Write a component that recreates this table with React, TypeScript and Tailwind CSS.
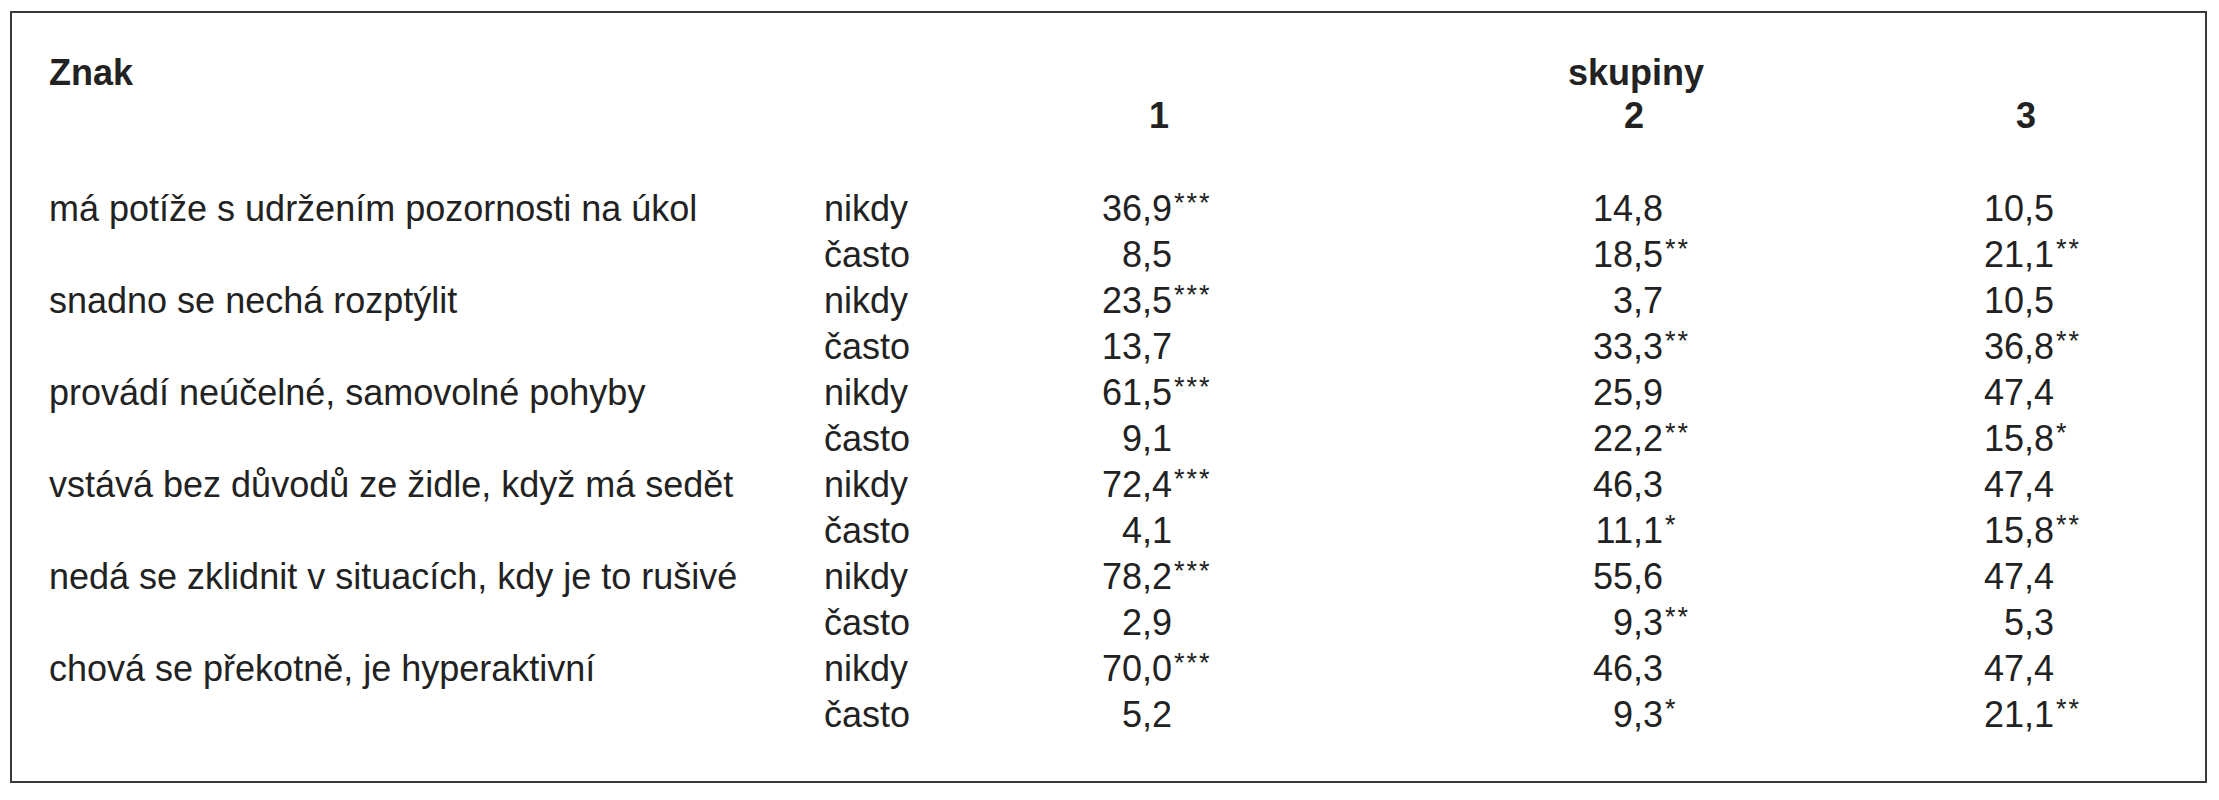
const rows: { label: string; freq: string; v: [string, string][] }[] = [
  { label: 'má potíže s udržením pozornosti na úkol', freq: 'nikdy', v: [['36,9', '***'], ['14,8', ''], ['10,5', '']] },
  { label: '', freq: 'často', v: [['8,5', ''], ['18,5', '**'], ['21,1', '**']] },
  { label: 'snadno se nechá rozptýlit', freq: 'nikdy', v: [['23,5', '***'], ['3,7', ''], ['10,5', '']] },
  { label: '', freq: 'často', v: [['13,7', ''], ['33,3', '**'], ['36,8', '**']] },
  { label: 'provádí neúčelné, samovolné pohyby', freq: 'nikdy', v: [['61,5', '***'], ['25,9', ''], ['47,4', '']] },
  { label: '', freq: 'často', v: [['9,1', ''], ['22,2', '**'], ['15,8', '*']] },
  { label: 'vstává bez důvodů ze židle, když má sedět', freq: 'nikdy', v: [['72,4', '***'], ['46,3', ''], ['47,4', '']] },
  { label: '', freq: 'často', v: [['4,1', ''], ['11,1', '*'], ['15,8', '**']] },
  { label: 'nedá se zklidnit v situacích, kdy je to rušivé', freq: 'nikdy', v: [['78,2', '***'], ['55,6', ''], ['47,4', '']] },
  { label: '', freq: 'často', v: [['2,9', ''], ['9,3', '**'], ['5,3', '']] },
  { label: 'chová se překotně, je hyperaktivní', freq: 'nikdy', v: [['70,0', '***'], ['46,3', ''], ['47,4', '']] },
  { label: '', freq: 'často', v: [['5,2', ''], ['9,3', '*'], ['21,1', '**']] },
];

// widths of the right-aligned number part in each group column
const numW = ['w-[172px]', 'w-[263px]', 'w-[254px]'];

export default function App() {
  return (
    <div className="bg-white w-[2219px] h-[800px] pt-[11px] pl-[10px] text-[#222] font-['Liberation_Sans',Arial,sans-serif] text-[36px]">
      <div className="w-[2197px] h-[772px] border-2 border-[#3a3a3a] pt-[38px] pl-[37px]">
        <div className="grid grid-cols-[775px_176px_400px_400px_380px] leading-[43px] font-bold">
          <div>Znak</div>
          <div />
          <div />
          <div className="pl-[168px]">skupiny</div>
          <div />
          <div />
          <div />
          <div><span className="inline-block w-[169px] text-right">1</span></div>
          <div><span className="inline-block w-[244px] text-right">2</span></div>
          <div><span className="inline-block w-[236px] text-right">3</span></div>
        </div>
        <div className="mt-[49px] grid grid-cols-[775px_176px_400px_400px_380px] leading-[46px]">
          {rows.map((r, i) => (
            <div key={i} className="contents">
              <div className="whitespace-nowrap">{r.label}</div>
              <div>{r.freq}</div>
              {r.v.map(([n, s], j) => (
                <div key={j} className="flex whitespace-nowrap">
                  <span className={`${numW[j]} text-right`}>{n}</span>
                  <span className="relative -top-[6px] pl-[2px] text-[27px] tracking-[2px]">{s}</span>
                </div>
              ))}
            </div>
          ))}
        </div>
      </div>
    </div>
  );
}
